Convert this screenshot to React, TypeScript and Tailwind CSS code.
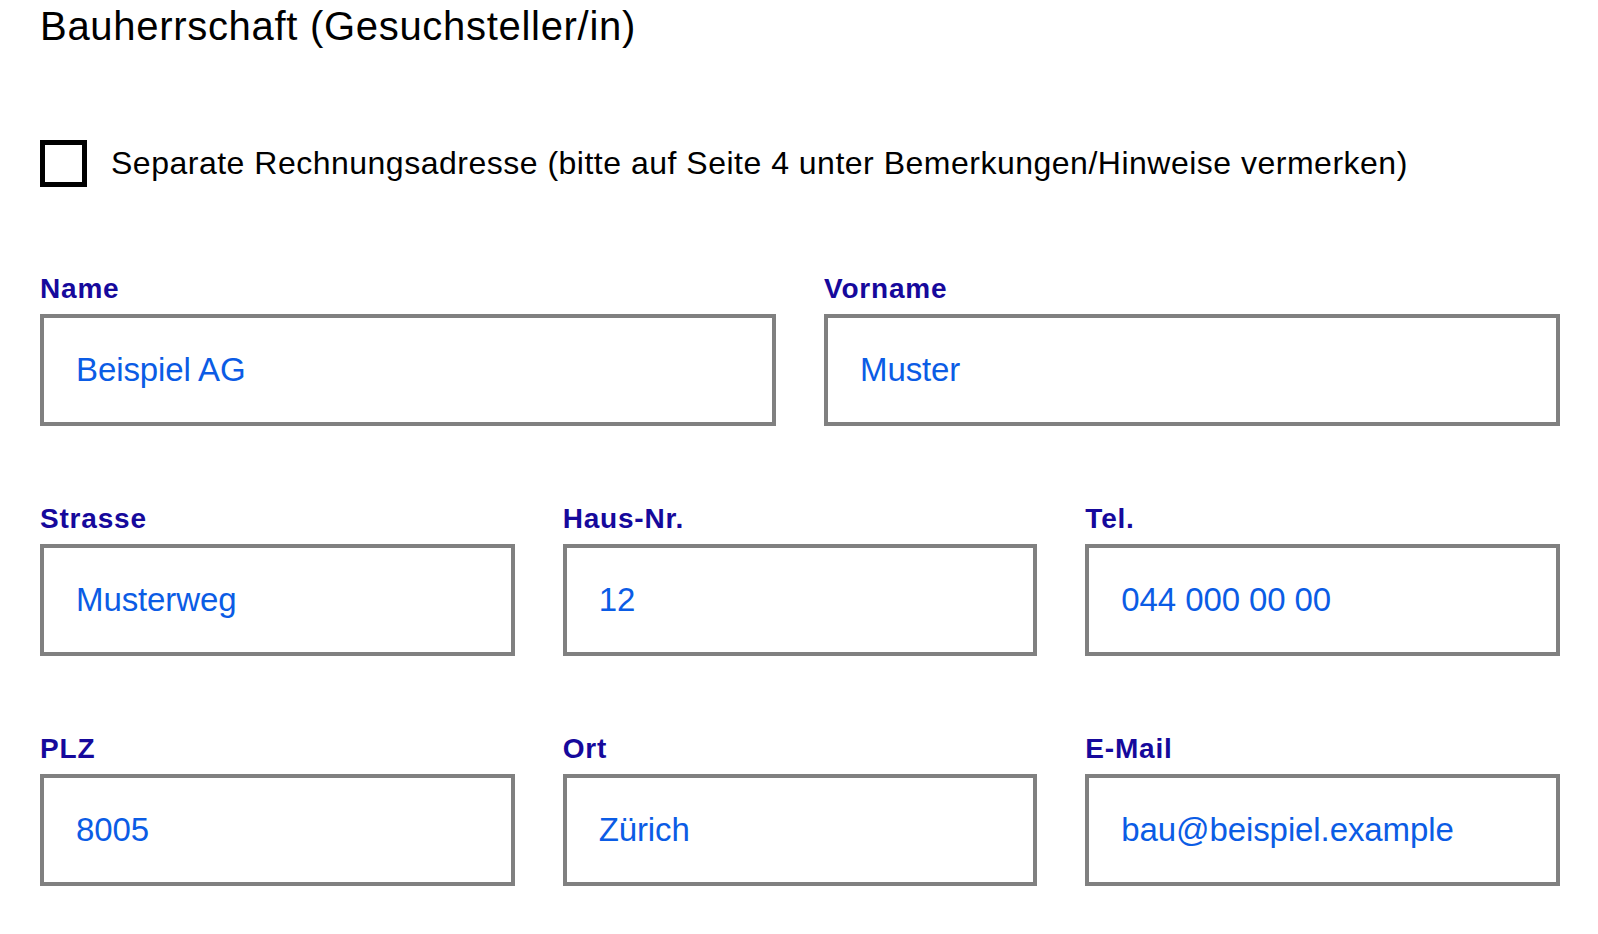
const font = { fontFamily: '"Liberation Sans", Arial, Helvetica, sans-serif' };

type Field = { label: string; value: string };

const nameRow: Field[] = [
  { label: "Name", value: "Beispiel AG" },
  { label: "Vorname", value: "Muster" },
];

const addressRows: Field[][] = [
  [
    { label: "Strasse", value: "Musterweg" },
    { label: "Haus-Nr.", value: "12" },
    { label: "Tel.", value: "044 000 00 00" },
  ],
  [
    { label: "PLZ", value: "8005" },
    { label: "Ort", value: "Zürich" },
    { label: "E-Mail", value: "bau@beispiel.example" },
  ],
];

function FormField({ label, value }: Field) {
  return (
    <div className="flex flex-col">
      <label className="mb-[9px] text-[28px] font-bold leading-[32px] tracking-[0.8px] text-[#16099c]">
        {label}
      </label>
      <div className="flex h-[112px] items-center border-4 border-[#808080] bg-white pl-8">
        <span className="text-[33px] tracking-[-0.1px] text-[#0b5ce5]">{value}</span>
      </div>
    </div>
  );
}

export default function App() {
  return (
    <div className="min-h-screen bg-white pl-10 pr-[38px] pt-[4px] text-black" style={font}>
      <h1 className="text-[40px] font-normal leading-[44px] tracking-[0.7px]">
        Bauherrschaft (Gesuchsteller/in)
      </h1>

      <label className="mt-[92px] flex items-center gap-6">
        <span className="h-[47px] w-[47px] shrink-0 border-[5px] border-black bg-white" />
        <span className="text-[32px] leading-[37px] tracking-[0.5px]">
          Separate Rechnungsadresse (bitte auf Seite 4 unter Bemerkungen/Hinweise vermerken)
        </span>
      </label>

      <div className="mt-[86px] grid grid-cols-2 gap-x-12">
        {nameRow.map((f) => (
          <FormField key={f.label} {...f} />
        ))}
      </div>

      {addressRows.map((row, i) => (
        <div key={i} className="mt-[77px] grid grid-cols-3 gap-x-12">
          {row.map((f) => (
            <FormField key={f.label} {...f} />
          ))}
        </div>
      ))}
    </div>
  );
}
